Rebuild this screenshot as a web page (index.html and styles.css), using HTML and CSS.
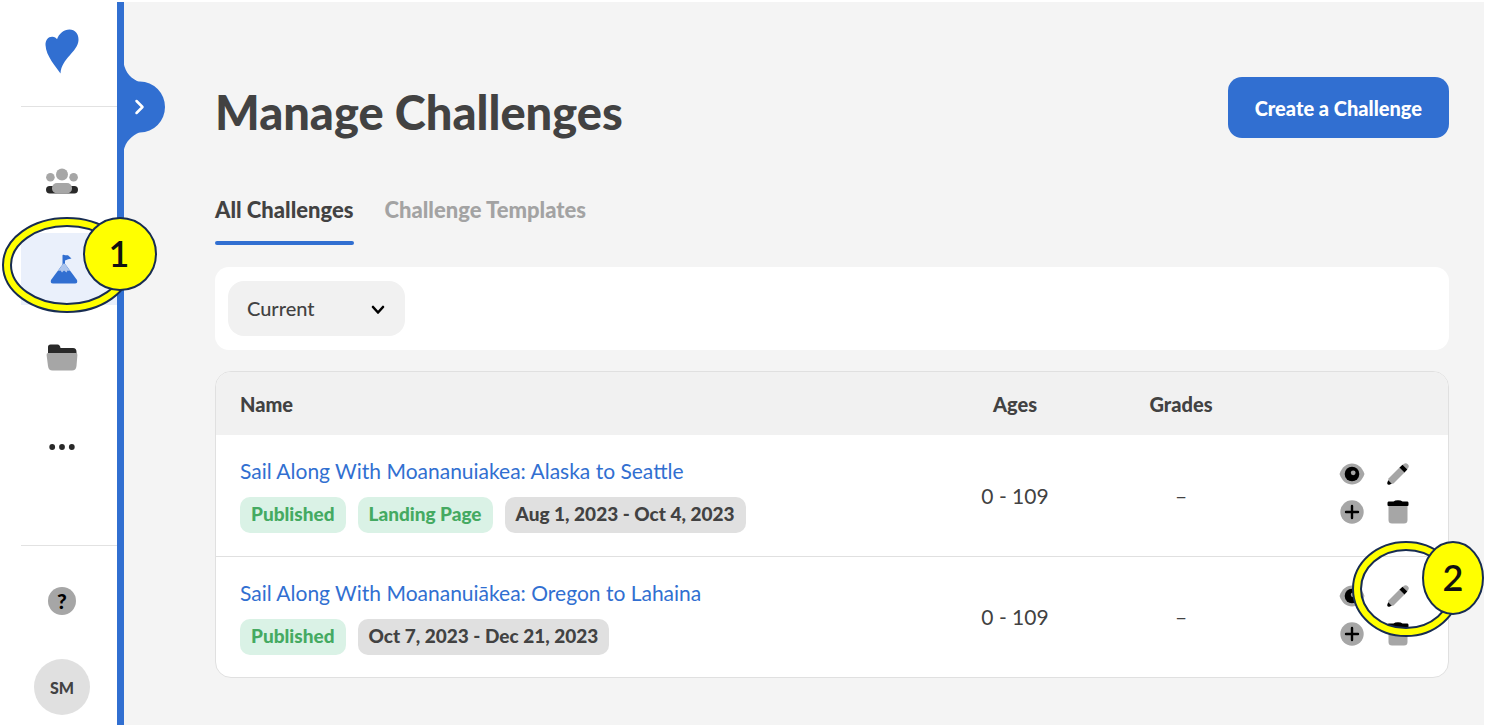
FILE: index.html
```html
<!DOCTYPE html>
<html lang="en">
<head>
  <meta charset="UTF-8">
  <meta name="viewport" content="width=device-width, initial-scale=1.0">
  <title>Manage Challenges</title>
  <link rel="stylesheet" href="styles.css">
</head>
<body>
  <!-- shared icons -->
  <svg class="sprite" aria-hidden="true">
    <symbol id="icon-eye" viewBox="0 0 26 22">
      <path d="M0.500 11C3 4 7.500 0.500 13 0.500S23 4 25.500 11C23 18 18.500 21.500 13 21.500S3 18 0.500 11z" fill="#a6a6a6"/>
      <circle cx="13" cy="11" r="7.300" fill="#000"/>
      <circle cx="14.200" cy="9.800" r="2.400" fill="#a6a6a6"/>
    </symbol>
    <symbol id="icon-pencil" viewBox="0 0 22 22">
      <path d="M1.500 15.500L13 4L18 9L6.500 20.500L1 21.500z" fill="#a6a6a6"/>
      <path d="M15.500 2L17 0.800Q19 -0.400 20.800 1.300T21.200 5L20 6.500z" fill="#a6a6a6"/>
      <path d="M12.500 4.500L15.500 1.700L20.300 6.500L17.500 9.500z" fill="#000"/>
      <path d="M1.200 17.300L4.700 20.800L2.200 21.800Q0 22 0.200 20z" fill="#000"/>
    </symbol>
    <symbol id="icon-plus" viewBox="0 0 24 24">
      <circle cx="12" cy="12" r="11.700" fill="#a6a6a6"/>
      <path d="M12 6V18M6 12H18" stroke="#000" stroke-width="2.400" stroke-linecap="round"/>
    </symbol>
    <symbol id="icon-trash" viewBox="0 0 22 24">
      <path d="M1.500 4H20.500V20Q20.500 23.500 17 23.500H5Q1.500 23.500 1.500 20z" fill="#a6a6a6"/>
      <path d="M1.500 1.500H6.500Q8 0.200 11 0.200T15.500 1.500H20.500Q21.500 1.500 21.500 3V5Q21.500 6 20.500 6H1.500Q0.500 6 0.500 5V3Q0.500 1.500 1.500 1.500z" fill="#000"/>
    </symbol>
  </svg>

  <div class="app">
    <aside class="sidebar">
      <a href="#" class="logo" aria-label="Home">
        <svg width="34" height="45" viewBox="0 0 34 45">
          <path d="M15.500 44.500C11.500 38 1 27.500 0.500 16C0.300 11 3.500 7.500 7.500 7.800C9.500 8 11 8.800 12 10.300C14 4.500 19 0.500 24.500 0.500C30 0.500 33.800 5 33.500 11C33 23 16.500 29 15.500 44.500z" fill="#316fd1"/>
        </svg>
      </a>
      <nav class="nav">
        <a href="#" class="nav-item" aria-label="People">
          <svg width="34" height="26" viewBox="0 0 34 26">
            <rect x="1" y="18" width="32" height="7.500" rx="3.700" fill="#292929"/>
            <circle cx="17" cy="6.500" r="6" fill="#a6a6a6"/>
            <circle cx="5.400" cy="9.300" r="4.300" fill="#a6a6a6"/>
            <circle cx="28.600" cy="9.300" r="4.300" fill="#a6a6a6"/>
            <rect x="7" y="15" width="20" height="10.500" rx="5" fill="#a6a6a6"/>
          </svg>
        </a>
        <div class="nav-marked">
          <a href="#" class="nav-item active" aria-label="Challenges">
            <svg width="28" height="30" viewBox="0 0 28 30">
              <path d="M12.500 1.500Q12.500 0.500 13.500 0.700Q16 1.600 18 1.200L21.500 4.500Q18 5 15 6.500V12H12.500z" fill="#316fd1"/>
              <path d="M12.500 10.500Q14 8.500 15.500 10.500L27 26Q28 29.500 25 29.500H3Q0 29.500 1 26z" fill="#316fd1"/>
              <path d="M12.500 10.500Q14 8.500 15.500 10.500L20 17L17.500 16.500L16.500 18.500L14 16.500L12 18.500L10.500 16.500L8 17z" fill="#adc5ec"/>
            </svg>
          </a>
          <svg class="callout callout-nav" width="157" height="98" viewBox="0 0 157 98" aria-hidden="true">
            <ellipse cx="66" cy="49" rx="60" ry="43" class="ring-edge"/>
            <ellipse cx="66" cy="49" rx="60" ry="43" class="ring-fill"/>
            <circle cx="119" cy="38" r="36" class="badge"/>
            <text x="118" y="51" class="badge-text">1</text>
          </svg>
        </div>
        <a href="#" class="nav-item" aria-label="Files">
          <svg width="32" height="27" viewBox="0 0 32 27">
            <path d="M2 14V3Q2 0.500 4.500 0.500H11.500Q14 0.500 14.500 4H27Q30.500 4 30.500 8V14z" fill="#292929"/>
            <path d="M2 9H30Q31.500 9 31.400 11L30.500 22Q30 26.500 26 26.500H6.500Q2.500 26.500 2 22L0.600 11Q0.500 9 2 9z" fill="#a6a6a6"/>
          </svg>
        </a>
        <a href="#" class="nav-item" aria-label="More">
          <svg width="26" height="10" viewBox="0 0 26 10">
            <circle cx="3.200" cy="7" r="2.900" fill="#292929"/>
            <circle cx="13" cy="7" r="2.900" fill="#292929"/>
            <circle cx="22.800" cy="7" r="2.900" fill="#292929"/>
          </svg>
        </a>
      </nav>
      <div class="sidebar-footer">
        <button type="button" class="help" aria-label="Help">?</button>
        <button type="button" class="avatar">SM</button>
      </div>
      <button type="button" class="toggle" aria-label="Expand menu">
        <svg width="42" height="98" viewBox="0 0 42 98">
          <path d="M0 1C1 12 6 19 14 23Q16 23.500 17 23.500A25 25.500 0 0 1 17 74.500Q16 74.500 14 75.500C6 80 1 86 0 97z" fill="#316fd1"/>
          <path d="M13.500 43L19.500 49L13.500 55" fill="none" stroke="#fff" stroke-width="2.500" stroke-linecap="round" stroke-linejoin="round"/>
        </svg>
      </button>
    </aside>

    <main class="main">
      <header class="page-header">
        <h1>Manage Challenges</h1>
        <button type="button" class="create">Create a Challenge</button>
      </header>

      <nav class="tabs">
        <a href="#" class="tab selected">All Challenges</a>
        <a href="#" class="tab">Challenge Templates</a>
      </nav>

      <div class="filters">
        <div class="select-wrap">
          <select aria-label="Show challenges">
            <option>Current</option>
          </select>
          <svg class="select-arrow" width="14" height="10" viewBox="0 0 14 10" aria-hidden="true">
            <path d="M2 2L7 7.500L12 2" fill="none" stroke="#000" stroke-width="2.600" stroke-linecap="round" stroke-linejoin="round"/>
          </svg>
        </div>
      </div>

      <div class="table-card">
        <table>
          <thead>
            <tr>
              <th class="name">Name</th>
              <th class="ages">Ages</th>
              <th class="grades">Grades</th>
              <th class="actions" aria-label="Actions"></th>
            </tr>
          </thead>
          <tbody>
            <tr>
              <td class="name">
                <a href="#">Sail Along With Moananuiakea: Alaska to Seattle</a>
                <div class="tags">
                  <span class="tag green">Published</span>
                  <span class="tag green">Landing Page</span>
                  <span class="tag">Aug 1, 2023 - Oct 4, 2023</span>
                </div>
              </td>
              <td>0 - 109</td>
              <td>–</td>
              <td class="actions">
                <div class="action-grid">
                  <button type="button" aria-label="View"><svg width="26" height="22"><use href="#icon-eye"/></svg></button>
                  <button type="button" aria-label="Edit"><svg width="22" height="22"><use href="#icon-pencil"/></svg></button>
                  <button type="button" aria-label="Add"><svg width="24" height="24"><use href="#icon-plus"/></svg></button>
                  <button type="button" aria-label="Delete"><svg width="22" height="24"><use href="#icon-trash"/></svg></button>
                </div>
              </td>
            </tr>
            <tr>
              <td class="name">
                <a href="#">Sail Along With Moananuiākea: Oregon to Lahaina</a>
                <div class="tags">
                  <span class="tag green">Published</span>
                  <span class="tag">Oct 7, 2023 - Dec 21, 2023</span>
                </div>
              </td>
              <td>0 - 109</td>
              <td>–</td>
              <td class="actions">
                <div class="action-grid">
                  <button type="button" aria-label="View"><svg width="26" height="22"><use href="#icon-eye"/></svg></button>
                  <button type="button" aria-label="Edit"><svg width="22" height="22"><use href="#icon-pencil"/></svg></button>
                  <button type="button" aria-label="Add"><svg width="24" height="24"><use href="#icon-plus"/></svg></button>
                  <button type="button" aria-label="Delete"><svg width="22" height="24"><use href="#icon-trash"/></svg></button>
                  <svg class="callout callout-edit" width="132" height="98" viewBox="0 0 132 98" aria-hidden="true">
                    <ellipse cx="54" cy="49" rx="49" ry="43" class="ring-edge"/>
                    <ellipse cx="54" cy="49" rx="49" ry="43" class="ring-fill"/>
                    <ellipse cx="101" cy="38" rx="30" ry="36" class="badge"/>
                    <text x="101" y="51" class="badge-text">2</text>
                  </svg>
                </div>
              </td>
            </tr>
          </tbody>
        </table>
      </div>
    </main>
  </div>
</body>
</html>
```
FILE: styles.css
```css
* {
  box-sizing: border-box;
}
body {
  margin: 0;
  padding: 2px 3px 2px 0;
  background-color: #fff;
  color: #424242;
  font-family: Lato, sans-serif;
  font-size: 21px;
}
a {
  color: inherit;
  text-decoration: none;
}
button {
  padding: 0;
  border: none;
  background: none;
  color: inherit;
  font-family: inherit;
  cursor: pointer;
}
svg {
  display: block;
}
.sprite {
  display: none;
}
.app {
  display: flex;
  min-height: calc(100vh - 4px);
}

/* Sidebar */
.sidebar {
  position: relative;
  display: flex;
  flex-direction: column;
  flex: none;
  width: 124px;
  padding-left: 21px;
  border-right: 7px solid #316fd1;
}
.logo {
  height: 105px;
  padding: 27px 0 0 24px;
  border-bottom: 1px solid #e2e2e2;
}
.nav {
  display: flex;
  flex-direction: column;
  gap: 16px;
  padding-top: 38px;
}
.nav-item {
  display: flex;
  align-items: center;
  justify-content: center;
  height: 72px;
  padding-right: 15px;
}
.nav-item.active {
  padding-right: 10px;
  background-color: #eaf0fb;
}
.nav-marked {
  position: relative;
}
.sidebar-footer {
  display: flex;
  flex-direction: column;
  align-items: center;
  gap: 44px;
  margin-top: auto;
  padding: 41px 14px 10px 0;
  border-top: 1px solid #e2e2e2;
}
.help {
  width: 28px;
  height: 28px;
  border-radius: 50%;
  background-color: #a6a6a6;
  color: #000;
  font-size: 21px;
  font-weight: 900;
  line-height: 28px;
}
.avatar {
  width: 56px;
  height: 56px;
  border-radius: 50%;
  background-color: #e0e0e0;
  font-size: 16px;
  font-weight: 900;
}
.toggle {
  position: absolute;
  top: 56px;
  left: 100%;
  margin-left: 6px;
}

/* Main */
.main {
  flex: 1;
  padding: 75px 35px 46px 91px;
  background-color: #f4f4f4;
}
.page-header {
  display: flex;
  align-items: center;
  justify-content: space-between;
}
h1 {
  margin: 0;
  padding-top: 8px;
  font-size: 47px;
  font-weight: 900;
  line-height: 52px;
}
.create {
  height: 61px;
  padding: 0 27px;
  border-radius: 14px;
  background-color: #316fd1;
  color: #fff;
  font-size: 20px;
  font-weight: 900;
}
.tabs {
  display: flex;
  gap: 31px;
  margin-top: 58px;
}
.tab {
  padding-bottom: 21px;
  color: #a3a3a3;
  font-size: 22px;
  font-weight: 900;
  line-height: 28px;
}
.tab.selected {
  position: relative;
  color: #424242;
}
.tab.selected::after {
  content: "";
  position: absolute;
  right: 0;
  bottom: 0;
  left: 0;
  height: 4px;
  border-radius: 2px;
  background-color: #316fd1;
}
.filters {
  display: flex;
  margin-top: 22px;
  padding: 14px 13px;
  border-radius: 14px;
  background-color: #fff;
}
.select-wrap {
  position: relative;
}
select {
  appearance: none;
  width: 177px;
  height: 55px;
  padding: 0 50px 2px 19px;
  border: none;
  border-radius: 16px;
  background-color: #f1f1f1;
  color: #424242;
  font-family: inherit;
  font-size: 20px;
  font-weight: 500;
}
.select-arrow {
  position: absolute;
  top: 24px;
  right: 20px;
  pointer-events: none;
}

/* Table */
.table-card {
  margin-top: 21px;
  border: 1px solid #e0e0e0;
  border-radius: 16px;
  background-color: #fff;
}
table {
  width: 100%;
  border-collapse: collapse;
  table-layout: fixed;
}
th {
  height: 63px;
  padding: 0;
  background-color: #f1f1f1;
  font-size: 20px;
  font-weight: 900;
}
th:first-child {
  border-top-left-radius: 15px;
}
th:last-child {
  border-top-right-radius: 15px;
}
th.ages,
th.grades {
  width: 166px;
}
th.actions {
  width: 184px;
}
td {
  height: 121px;
  padding: 0;
  text-align: center;
}
tbody tr + tr td {
  border-top: 1px solid #e0e0e0;
}
th.name,
td.name {
  padding-left: 24px;
  text-align: left;
}
td.name a {
  color: #316fd1;
  line-height: 28px;
}
.tags {
  display: flex;
  gap: 12px;
  margin-top: 12px;
}
.tag {
  padding: 0 11px 2px;
  border-radius: 10px;
  background-color: #e0e0e0;
  font-size: 19px;
  font-weight: 900;
  line-height: 34px;
}
.tag.green {
  background-color: #daf2e6;
  color: #45aa62;
}
.action-grid {
  position: relative;
  display: grid;
  grid-template-columns: 26px 26px;
  gap: 14px 20px;
  justify-content: end;
  padding: 0 37px 4px 0;
}
.action-grid button {
  display: flex;
  align-items: center;
  justify-content: center;
  height: 24px;
}

/* Callouts */
.callout {
  position: absolute;
  z-index: 1;
  pointer-events: none;
}
.callout-nav {
  top: -17px;
  left: -20px;
}
.callout-edit {
  top: -44px;
  right: -36px;
}
.ring-edge {
  fill: none;
  stroke: #172c51;
  stroke-width: 10px;
}
.ring-fill {
  fill: none;
  stroke: #ff0;
  stroke-width: 6px;
}
.badge {
  fill: #ff0;
  stroke: #172c51;
  stroke-width: 2px;
}
.badge-text {
  fill: #111;
  font-size: 36px;
  font-weight: 600;
  text-anchor: middle;
}
```
